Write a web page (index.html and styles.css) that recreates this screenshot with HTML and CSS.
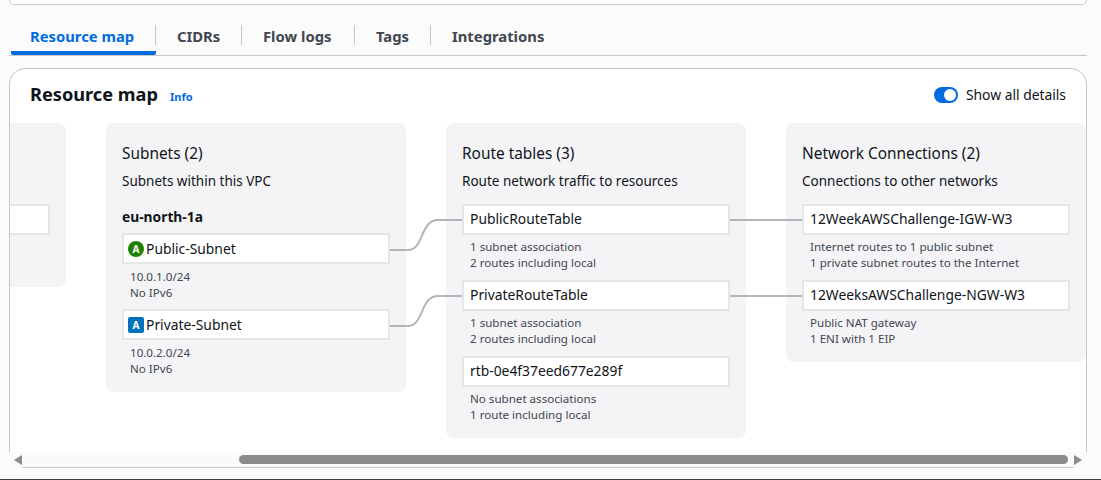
FILE: index.html
```html
<!DOCTYPE html>
<html lang="en">
<head>
<meta charset="utf-8">
<title>Resource map</title>
<link rel="stylesheet" href="styles.css">
</head>
<body>
<div class="page">
  <div class="top-card"></div>
  <nav class="tabs">
    <a class="tab tab-active">Resource map</a>
    <a class="tab tab-cidrs">CIDRs</a>
    <a class="tab tab-flow">Flow logs</a>
    <a class="tab tab-tags">Tags</a>
    <a class="tab tab-last">Integrations</a>
  </nav>
  <section class="card">
    <header class="card-head">
      <h2 class="card-title">Resource map</h2>
      <a class="info">Info</a>
      <label class="toggle-wrap">
        <span class="toggle"><span class="knob"></span></span>
        <span>Show all details</span>
      </label>
    </header>
    <div class="map">
      <svg class="links" viewBox="10 123 1076 330" aria-hidden="true">
        <path d="M390 250H408C424 250 420 220 438 220H463"/>
        <path d="M390 326H408C424 326 420 296 438 296H463"/>
        <path d="M730 220H802"/>
        <path d="M730 296H802"/>
      </svg>
      <div class="col col-vpc">
        <div class="node"></div>
      </div>
      <div class="col">
        <h3 class="col-title">Subnets (2)</h3>
        <p class="col-desc">Subnets within this VPC</p>
        <div class="region">eu-north-1a</div>
        <div class="node node-icon"><span class="badge badge-public">A</span><span class="name">Public-Subnet</span></div>
        <div class="meta meta-subnet meta-gap"><div>10.0.1.0/24</div><div>No IPv6</div></div>
        <div class="node node-icon"><span class="badge badge-private">A</span><span class="name">Private-Subnet</span></div>
        <div class="meta meta-subnet"><div>10.0.2.0/24</div><div>No IPv6</div></div>
      </div>
      <div class="col">
        <h3 class="col-title">Route tables (3)</h3>
        <p class="col-desc">Route network traffic to resources</p>
        <div class="node"><span class="name">PublicRouteTable</span></div>
        <div class="meta meta-gap"><div>1 subnet association</div><div>2 routes including local</div></div>
        <div class="node"><span class="name">PrivateRouteTable</span></div>
        <div class="meta meta-gap"><div>1 subnet association</div><div>2 routes including local</div></div>
        <div class="node"><span class="name">rtb-0e4f37eed677e289f</span></div>
        <div class="meta"><div>No subnet associations</div><div>1 route including local</div></div>
      </div>
      <div class="col">
        <h3 class="col-title">Network Connections (2)</h3>
        <p class="col-desc">Connections to other networks</p>
        <div class="node"><span class="name">12WeekAWSChallenge-IGW-W3</span></div>
        <div class="meta meta-gap"><div>Internet routes to 1 public subnet</div><div>1 private subnet routes to the Internet</div></div>
        <div class="node"><span class="name">12WeeksAWSChallenge-NGW-W3</span></div>
        <div class="meta"><div>Public NAT gateway</div><div>1 ENI with 1 EIP</div></div>
      </div>
    </div>
    <div class="scrollbar">
      <span class="arrow arrow-left"></span>
      <span class="track"><span class="thumb"></span></span>
      <span class="arrow arrow-right"></span>
    </div>
  </section>
</div>
</body>
</html>
```
FILE: styles.css
```css
* { box-sizing: border-box; }
html, body { margin: 0; height: 100%; }
body {
  background: #fbfbfc;
  color: #0f141a;
  font-family: "Noto Sans", "Liberation Sans", sans-serif;
  font-size: 14px;
  overflow: hidden;
}
.page {
  height: 480px;
  padding: 0 14px 0 9px;
  border-bottom: 1px solid #3a3f47;
  display: flex;
  flex-direction: column;
}
.top-card {
  height: 5px;
  background: #fff;
  border: 1px solid #c6c6cd;
  border-top: 0;
  border-radius: 0 0 16px 16px;
}
.tabs {
  height: 51px;
  display: flex;
  align-items: flex-end;
  padding-left: 2px;
  border-bottom: 1px solid #c6c6cd;
}
.tab {
  height: 31px;
  display: flex;
  align-items: flex-start;
  padding: 1px 0 0 21px;
  position: relative;
  font-size: 14.8px;
  line-height: 22px;
  font-weight: 700;
  color: #424650;
}
.tab::after {
  content: "";
  width: 1px;
  height: 20px;
  background: #c6c6cd;
  position: absolute;
  right: 0;
  top: 1px;
}
.tab-active {
  width: 145px;
  color: #006ce0;
  padding-left: 19px;
  border-bottom: 4px solid #006ce0;
  border-radius: 2px;
}
.tab-cidrs { width: 86px; }
.tab-flow { width: 113px; }
.tab-tags { width: 76px; }
.tab-last::after { display: none; }
.card {
  margin-top: 12px;
  height: 400px;
  background: #fff;
  border: 1px solid #c6c6cd;
  border-radius: 16px;
  display: flex;
  flex-direction: column;
}
.card-head {
  height: 54px;
  flex: none;
  display: flex;
  align-items: center;
  padding: 0 20px 3px;
}
.card-title {
  margin: 0 0 2px;
  font-size: 18.2px;
  font-weight: 700;
  line-height: 24px;
}
.info {
  margin-left: 12px;
  font-size: 11px;
  font-weight: 700;
  color: #006ce0;
  padding-top: 4px;
}
.toggle-wrap {
  margin-left: auto;
  display: flex;
  align-items: center;
  gap: 8px;
  font-size: 13.85px;
}
.toggle {
  width: 24px;
  height: 16px;
  border-radius: 8px;
  background: #006ce0;
  padding: 2px;
  display: flex;
  justify-content: flex-end;
}
.knob {
  width: 12px;
  height: 12px;
  border-radius: 50%;
  background: #fff;
}
.map {
  position: relative;
  flex: 1;
  min-height: 0;
  display: flex;
  align-items: flex-start;
  gap: 40px;
  overflow: hidden;
}
.links {
  position: absolute;
  left: 0;
  top: 0;
  width: 1076px;
  height: 330px;
  fill: none;
  stroke: #b4b4bb;
  stroke-width: 2;
  z-index: 1;
}
.col {
  flex: none;
  width: 300px;
  padding: 16px 16px 15px;
  background: #f4f4f6;
  border-radius: 8px;
}
.col-vpc {
  margin-left: -244px;
  height: 164px;
  padding-top: 81px;
}
.col-title {
  margin: 1px 0 0;
  font-size: 15.4px;
  line-height: 28px;
  font-weight: 400;
}
.col-desc {
  margin: 3px 0 13px;
  font-size: 13.5px;
  line-height: 20px;
}
.region {
  margin: 16px 0 6px;
  font-size: 13.8px;
  line-height: 20px;
  font-weight: 700;
}
.node {
  height: 31px;
  background: #fff;
  border: 2px solid #e6e6ea;
  display: flex;
  align-items: center;
  padding: 0 6px 3px;
  font-size: 13.85px;
  position: relative;
  z-index: 2;
}
.node-icon { padding: 0 4px; gap: 2px; }
.name { white-space: nowrap; }
.badge {
  width: 16px;
  height: 16px;
  color: #fff;
  font-size: 10px;
  font-weight: 700;
  line-height: 16px;
  text-align: center;
}
.badge-public { background: #1d8102; border-radius: 50%; }
.badge-private { background: #0073bb; border-radius: 2px; }
.meta {
  padding: 4px 8px 0;
  font-size: 11.6px;
  line-height: 16px;
  color: #424650;
  white-space: nowrap;
}
.meta-subnet { padding-top: 5px; }
.meta-gap { margin-bottom: 9px; }
.meta-subnet.meta-gap { margin-bottom: 8px; }
.scrollbar {
  flex: none;
  height: 15px;
  margin: 0 -1px;
  display: flex;
  align-items: center;
  padding: 0 5px;
  background: #fafafb;
  position: relative;
}
.track {
  flex: 1;
  height: 9px;
  padding-left: 217px;
  padding-right: 6px;
  display: flex;
}
.thumb {
  flex: 1;
  background: #8c8c8c;
  border-radius: 5px;
}
.arrow {
  width: 0;
  height: 0;
  border-top: 5px solid transparent;
  border-bottom: 5px solid transparent;
}
.arrow-left { border-right: 8px solid #8c8c8c; }
.arrow-right { border-left: 8px solid #8c8c8c; }
```
